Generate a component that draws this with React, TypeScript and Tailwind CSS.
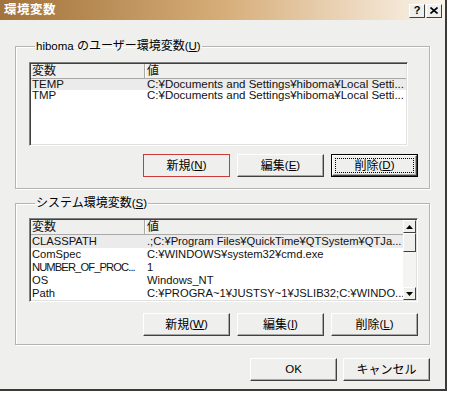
import React from 'react';

const J = ({ children }: { children: React.ReactNode }) => <span className="text-[12px]">{children}</span>;

type BtnKind = 'normal' | 'default' | 'marked';

const Btn = ({ children, kind = 'normal' }: { children: React.ReactNode; kind?: BtnKind }) => {
    const face =
        'w-full h-full flex items-center justify-center bg-[#efefed] border border-t-white border-l-white border-r-[#404040] border-b-[#404040] shadow-[inset_-1px_-1px_0_#a8a8a8]';
    if (kind === 'default') {
        return (
            <div className="w-[87px] h-[23px] border border-black">
                <div className={face}>
                    <div className="w-[79px] h-[15px] flex items-center justify-center border border-dotted border-black">{children}</div>
                </div>
            </div>
        );
    }
    if (kind === 'marked') {
        return (
            <div className="w-[87px] h-[23px] border border-[#cc3b3b] bg-[#efefed] flex items-center justify-center">{children}</div>
        );
    }
    return (
        <div className="w-[87px] h-[23px]">
            <div className={face}>{children}</div>
        </div>
    );
};

const ScrollArrow = ({ up }: { up?: boolean }) => (
    <div className="w-[13px] h-[13px] flex items-center justify-center bg-[#efefed] border border-t-white border-l-white border-r-[#404040] border-b-[#404040]">
        <svg width="7" height="4" viewBox="0 0 7 4">
            <path d={up ? 'M3.5 0 L7 4 L0 4 Z' : 'M0 0 L7 0 L3.5 4 Z'} fill="#000" />
        </svg>
    </div>
);

const ListHeader = () => (
    <div className="h-[15px] flex bg-[#efefed] border-b border-[#a8a8a8] text-[#111]">
        <div className="w-[114px] pl-[1px] flex items-center border-r border-[#a8a8a8] shadow-[1px_0_0_white]">
            <J>変数</J>
        </div>
        <div className="flex-1 pl-[2px] flex items-center">
            <J>値</J>
        </div>
    </div>
);

const Row = ({ name, value, sel, h, tight, size = 'text-[11.5px]' }: { name: string; value: string; sel?: boolean; h: string; tight?: boolean; size?: string }) => (
    <div className={`${h} ${size} flex items-center whitespace-nowrap text-[#111] ${sel ? 'bg-[#ebebeb]' : ''}`}>
        <div className={`w-[114px] pl-[1px] overflow-hidden ${tight ? 'tracking-[-0.9px]' : ''}`}>{name}</div>
        <div className="flex-1 pl-[2px] overflow-hidden">{value}</div>
    </div>
);

const listBorder =
    'bg-white border border-t-[#808080] border-l-[#808080] border-r-white border-b-white shadow-[inset_1px_1px_0_#404040,inset_-1px_-1px_0_#e0e0e0] overflow-hidden';

export default function App() {
    const userVal = 'C:¥Documents and Settings¥hiboma¥Local Setti...';
    const sys = 'text-[11.2px]';
    return (
        <div className="w-[452px] h-[398px] bg-white font-['Liberation_Sans','Noto_Sans_CJK_JP',sans-serif] text-[11.5px] leading-none text-black">
            <div className="w-[447px] h-[391px] flex flex-col bg-[#efefed] border-r-2 border-b-2 border-[#3a3a3a]">
                {/* Title bar */}
                <div className="h-[20px] flex items-center justify-between pl-[4px] pr-[3px] bg-linear-to-r from-[#a2733a] via-[#d6ad78] to-[#faf5ec]">
                    <span className="text-[12.5px] font-bold text-white tracking-[0.5px]">環境変数</span>
                    <div className="flex gap-[1px] mt-[1px]">
                        <div className="w-[16px] h-[14px] flex items-center justify-center bg-[#efefed] border border-t-white border-l-white border-r-[#404040] border-b-[#404040] text-[11px] font-bold">?</div>
                        <div className="w-[16px] h-[14px] flex items-center justify-center bg-[#efefed] border border-t-white border-l-white border-r-[#404040] border-b-[#404040]">
                            <svg width="8" height="7" viewBox="0 0 8 7">
                                <path d="M0.5 0.5 L7.5 6.5 M7.5 0.5 L0.5 6.5" stroke="#000" strokeWidth="1.6" />
                            </svg>
                        </div>
                    </div>
                </div>

                <div className="flex flex-col pl-[15px]">
                    {/* User variables */}
                    <fieldset className="mt-[19px] w-[415px] border border-[#b4b4b4] shadow-[1px_1px_0_white,inset_1px_1px_0_white] pl-[13px] pb-[11px]">
                        <legend className="ml-[6px] px-[1px] h-[14px] leading-[14px]">
                            hiboma <J>のユーザー環境変数</J>(<u>U</u>)
                        </legend>
                        <div className={`mt-[9px] w-[379px] h-[84px] p-[1px] ${listBorder}`}>
                            <ListHeader />
                            <Row name="TEMP" value={userVal} sel h="h-[11px]" />
                            <Row name="TMP" value={userVal} h="h-[11px]" />
                        </div>
                        <div className="mt-[8px] flex gap-[7px] ml-[114px]">
                            <Btn kind="marked">
                                <J>新規</J>(<u>N</u>)
                            </Btn>
                            <Btn>
                                <J>編集</J>(<u>E</u>)
                            </Btn>
                            <Btn kind="default">
                                <J>削除</J>(<u>D</u>)
                            </Btn>
                        </div>
                    </fieldset>

                    {/* System variables */}
                    <fieldset className="mt-[7px] w-[415px] border border-[#b4b4b4] shadow-[1px_1px_0_white,inset_1px_1px_0_white] pl-[13px] pb-[8px]">
                        <legend className="ml-[6px] px-[1px] h-[14px] leading-[14px]">
                            <J>システム環境変数</J>(<u>S</u>)
                        </legend>
                        <div className={`mt-[8px] w-[389px] h-[84px] p-[1px] flex ${listBorder}`}>
                            <div className="flex-1 overflow-hidden">
                                <ListHeader />
                                <Row size={sys} name="CLASSPATH" value=".;C:¥Program Files¥QuickTime¥QTSystem¥QTJa..." sel h="h-[13px]" />
                                <Row size={sys} name="ComSpec" value="C:¥WINDOWS¥system32¥cmd.exe" h="h-[13px]" />
                                <Row size={sys} name="NUMBER_OF_PROC..." value="1" h="h-[13px]" tight />
                                <Row size={sys} name="OS" value="Windows_NT" h="h-[13px]" />
                                <Row size={sys} name="Path" value="C:¥PROGRA~1¥JUSTSY~1¥JSLIB32;C:¥WINDO..." h="h-[13px]" />
                                <Row size={sys} name="PATHEXT" value=".COM;.EXE;.BAT;.CMD;.VBS;.VBE;.JS;.JSE;.WSF;.WSH" h="h-[11px]" />
                            </div>
                            <div className="w-[13px] flex flex-col bg-[#f4f4f2]">
                                <ScrollArrow up />
                                <div className="h-[19px] bg-[#efefed] border border-t-white border-l-white border-r-[#404040] border-b-[#404040]" />
                                <div className="flex-1" />
                                <ScrollArrow />
                            </div>
                        </div>
                        <div className="mt-[11px] flex gap-[7px] ml-[114px]">
                            <Btn>
                                <J>新規</J>(<u>W</u>)
                            </Btn>
                            <Btn>
                                <J>編集</J>(<u>I</u>)
                            </Btn>
                            <Btn>
                                <J>削除</J>(<u>L</u>)
                            </Btn>
                        </div>
                    </fieldset>

                    {/* Dialog buttons */}
                    <div className="mt-[13px] flex gap-[6px] ml-[235px]">
                        <Btn>OK</Btn>
                        <Btn>
                            <J>キャンセル</J>
                        </Btn>
                    </div>
                </div>
            </div>
        </div>
    );
}
